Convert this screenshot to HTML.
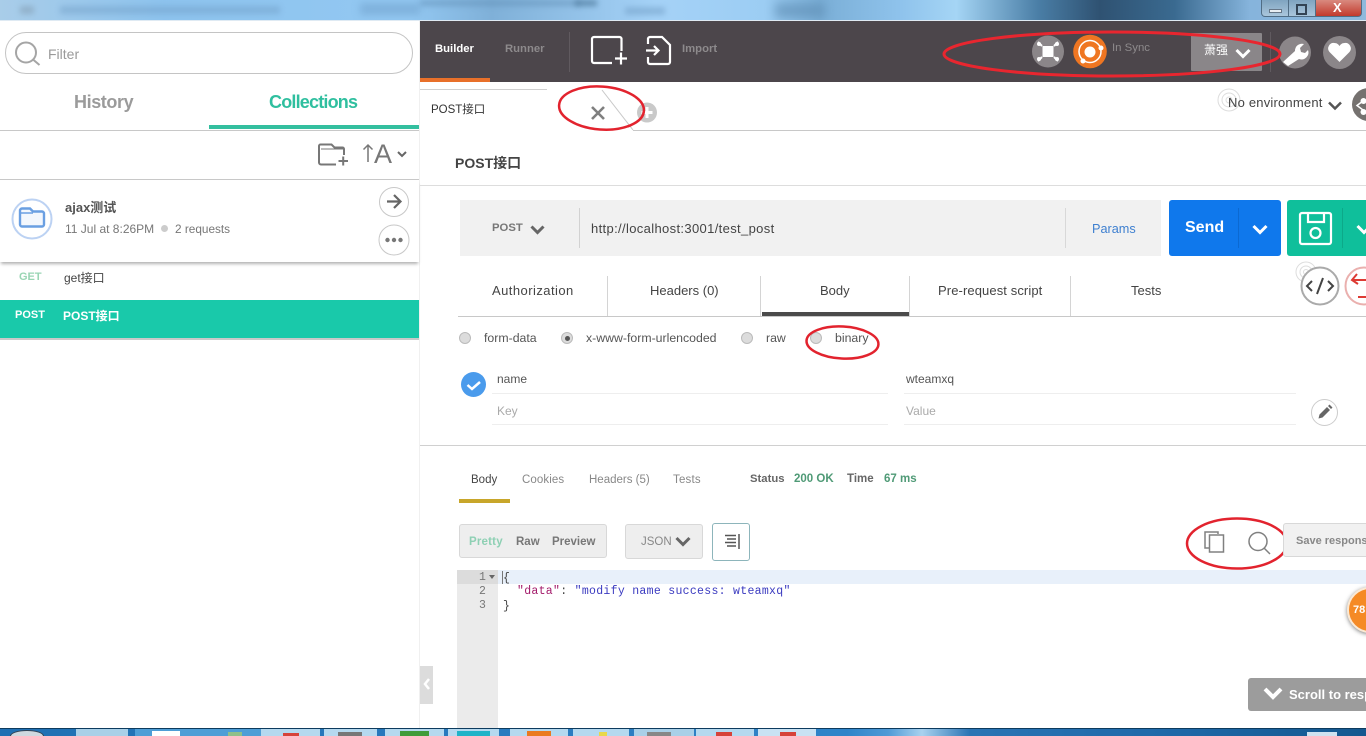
<!DOCTYPE html>
<html><head><meta charset="utf-8">
<style>
html,body{margin:0;padding:0;width:1366px;height:736px;overflow:hidden;background:#fff}
body{position:relative;font-family:"Liberation Sans","Noto Sans CJK SC",sans-serif;color:#444}
.a{position:absolute}
.t{position:absolute;white-space:nowrap;line-height:16px}
svg{position:absolute;overflow:visible}
</style></head><body>
<!-- title bar -->
<div class="a" style="left:0;top:0;width:1366px;height:21px;overflow:hidden;background:linear-gradient(90deg,#a9cde9 0,#8dc3ee 12%,#93c8f2 30%,#7fb0d8 36%,#a5d2f7 48%,#9ccdf3 56%,#7aaed6 60%,#8fc3ec 66%,#a5d5f5 70%,#4a7ea6 76%,#2f5272 80.5%,#3a6a90 86%,#86b4dc 91.5%,#8fb9dc 100%)">
<div class="a" style="left:20px;top:6px;width:14px;height:8px;background:#7f98ad;opacity:.5;filter:blur(3px)"></div>
<div class="a" style="left:60px;top:6px;width:220px;height:8px;background:#6f9cc4;opacity:.45;filter:blur(3px)"></div>
<div class="a" style="left:360px;top:3px;width:60px;height:12px;background:#6d9dc8;opacity:.5;filter:blur(4px)"></div>
<div class="a" style="left:420px;top:0;width:160px;height:6px;background:#5f8cb3;opacity:.5;filter:blur(3px)"></div>
<div class="a" style="left:575px;top:0;width:22px;height:6px;background:#3f6b8c;opacity:.6;filter:blur(3px)"></div>
<div class="a" style="left:625px;top:7px;width:40px;height:8px;background:#6f9cc4;opacity:.5;filter:blur(3px)"></div>
<div class="a" style="left:775px;top:3px;width:50px;height:15px;background:#5d8cb3;opacity:.6;filter:blur(5px)"></div>
</div>
<div class="a" style="left:0;top:20px;width:1366px;height:1px;background:#dfeaf3"></div>
<div class="a" style="left:1261px;top:0;width:28px;height:17px;background:linear-gradient(#7fa4c0,#aac6dc);border:1px solid #506d85;border-top:0;border-radius:0 0 0 4px;box-sizing:border-box"></div>
<div class="a" style="left:1269px;top:9px;width:11px;height:2px;background:#e8eef3;border:1px solid #678"></div>
<div class="a" style="left:1289px;top:0;width:26px;height:17px;background:linear-gradient(#7fa4c0,#aac6dc);border-bottom:1px solid #506d85;box-sizing:border-box"></div>
<div class="a" style="left:1296px;top:4px;width:7px;height:7px;border:2px solid #345"></div>
<div class="a" style="left:1315px;top:0;width:47px;height:17px;background:linear-gradient(#d98a7f,#c23a2c);border:1px solid #506d85;border-top:0;border-radius:0 0 4px 0;box-sizing:border-box"></div>
<div class="t" style="left:1333px;top:0;color:#fff;font-weight:bold;font-size:13px">X</div>

<!-- sidebar -->
<div class="a" style="left:419px;top:21px;width:1px;height:707px;background:#f0f0f0"></div>
<div class="a" style="left:5px;top:32px;width:408px;height:42px;border:1px solid #c4c4c4;border-radius:21px;box-sizing:border-box"></div>
<svg style="left:14px;top:39px" width="28" height="28" fill="none" stroke="#a5a5a5"><circle cx="12" cy="13.500" r="10" stroke-width="2"/><path d="M19 20.500l6.500 5.500" stroke-width="2"/></svg>
<div class="t" style="left:48px;top:46px;font-size:14px;color:#9a9a9a">Filter</div>
<div class="t" style="left:74px;top:92px;font-size:18px;font-weight:bold;color:#9b9b9b;line-height:20px;letter-spacing:-.4px">History</div>
<div class="t" style="left:269px;top:92px;font-size:18px;font-weight:bold;color:#2fbf9f;line-height:20px;letter-spacing:-.8px">Collections</div>
<div class="a" style="left:0;top:130px;width:419px;height:1px;background:#c8c8c8"></div>
<div class="a" style="left:209px;top:125px;width:210px;height:4px;background:#33bf9f"></div>
<svg style="left:318px;top:143px" width="32" height="25" fill="none" stroke="#777" stroke-width="2"><path d="M18 21.500H3a2 2 0 0 1-2-2V3a1.500 1.500 0 0 1 1.500-1.500h11l3 3h8a1.500 1.500 0 0 1 1.500 1.500v6"/><path d="M3 6h22" stroke-width="1"/><path d="M20.500 18h9.500M25.200 13.500v9"/></svg>
<svg style="left:362px;top:143px" width="12" height="20" fill="none" stroke="#777" stroke-width="1.500"><path d="M6 19V2M1.500 6.500L6 2l4.500 4.500"/></svg>
<div class="t" style="left:374px;top:140px;font-size:27px;color:#777;line-height:28px">A</div>
<svg style="left:397px;top:151px" width="10" height="7" fill="none" stroke="#666" stroke-width="2"><path d="M1 1l4 4 4-4"/></svg>
<div class="a" style="left:0;top:179px;width:419px;height:1px;background:#c8c8c8"></div>
<div class="a" style="left:0;top:180px;width:419px;height:82px;background:#fff;box-shadow:0 3px 3px -1px rgba(0,0,0,.3)"></div>
<svg style="left:11px;top:198px" width="42" height="42" fill="none"><circle cx="21" cy="21" r="19.500" stroke="#bcd2f3" stroke-width="2"/><path d="M9 15v-2.500a2 2 0 0 1 2-2h8l3 3h9a2 2 0 0 1 2 2v11a2 2 0 0 1-2 2H11a2 2 0 0 1-2-2z" fill="#f3f7fd" stroke="#6a9fe2" stroke-width="2.400"/><path d="M9 15h13" stroke="#6a9fe2" stroke-width="1.500"/></svg>
<div class="t" style="left:65px;top:200px;font-size:13px;font-weight:bold;color:#555">ajax测试</div>
<div class="t" style="left:65px;top:221px;font-size:12px;color:#777">11 Jul at 8:26PM</div>
<div class="a" style="left:161px;top:225px;width:7px;height:7px;border-radius:50%;background:#ccc"></div>
<div class="t" style="left:175px;top:221px;font-size:11.800px;color:#777">2 requests</div>
<svg style="left:378px;top:186px" width="32" height="32" fill="none"><circle cx="16" cy="16" r="14.500" stroke="#c8c8c8"/><path d="M9 15.500h13M16 9l6.500 6.500L16 22" stroke="#666" stroke-width="2.200"/></svg>
<svg style="left:378px;top:224px" width="32" height="32"><circle cx="16" cy="16" r="15" fill="#fff" stroke="#c8c8c8"/><circle cx="9.500" cy="16" r="2.200" fill="#777"/><circle cx="16" cy="16" r="2.200" fill="#777"/><circle cx="22.500" cy="16" r="2.200" fill="#777"/></svg>
<div class="t" style="left:19px;top:269px;font-size:11px;font-weight:bold;color:#9ad5b4">GET</div>
<div class="t" style="left:64px;top:270px;font-size:12px;color:#444">get接口</div>
<div class="a" style="left:0;top:300px;width:419px;height:38px;background:#19c9aa"></div>
<div class="a" style="left:0;top:338px;width:419px;height:2px;background:#c9c9c9"></div>
<div class="t" style="left:15px;top:307px;font-size:11px;font-weight:bold;color:#fff">POST</div>
<div class="t" style="left:63px;top:308px;font-size:12px;font-weight:bold;color:#fff">POST接口</div>
<div class="a" style="left:420px;top:666px;width:13px;height:38px;background:#dcdcdc"></div>
<svg style="left:423px;top:678px" width="7" height="12" fill="none" stroke="#fff" stroke-width="2.500"><path d="M6 1L2 6l4 5"/></svg>

<!-- header -->
<div class="a" style="left:420px;top:21px;width:946px;height:61px;background:#4c464b"></div>
<div class="a" style="left:420px;top:78px;width:70px;height:4px;background:#e8702a"></div>
<div class="t" style="left:435px;top:41px;font-size:11.300px;font-weight:bold;color:#fff">Builder</div>
<div class="t" style="left:505px;top:41px;font-size:11.300px;font-weight:bold;color:#8d8a8c">Runner</div>
<div class="a" style="left:569px;top:32px;width:1px;height:40px;background:#605a5f"></div>
<svg style="left:590px;top:35px" width="38" height="31" fill="none" stroke="#fff" stroke-width="2.200"><path d="M31.500 16V4a2 2 0 0 0-2-2H4a2 2 0 0 0-2 2v22a2 2 0 0 0 2 2h18"/><path d="M25 23.500h12M31 17.500v12"/></svg>
<svg style="left:646px;top:35px" width="26" height="31" fill="none" stroke="#fff" stroke-width="2.200"><path d="M2 9V4a2 2 0 0 1 2-2h12l8 8v17a2 2 0 0 1-2 2H4a2 2 0 0 1-2-2v-5"/><path d="M0 15.500h12M8 11l4.500 4.500L8 20"/></svg>
<div class="t" style="left:682px;top:41px;font-size:11.300px;font-weight:bold;color:#8d8a8c">Import</div>
<svg style="left:1032px;top:35px" width="33" height="33"><circle cx="16" cy="16.500" r="16" fill="#8b8689"/><rect x="10.500" y="11" width="11" height="11" fill="#fff"/><path d="M6 7l4 4M26 7l-4 4M6 26l4-4M26 26l-4-4" stroke="#fff" stroke-width="2"/><circle cx="7" cy="9" r="2" fill="#fff"/><circle cx="25" cy="9" r="2" fill="#fff"/><circle cx="7" cy="24" r="2" fill="#fff"/><circle cx="25" cy="24" r="2" fill="#fff"/></svg>
<svg style="left:1073px;top:34px" width="35" height="35"><circle cx="17" cy="17.500" r="16.800" fill="#ef7622"/><circle cx="17" cy="17.500" r="11" fill="none" stroke="#fff" stroke-width="1.500"/><circle cx="17" cy="18" r="5.500" fill="#fff"/><circle cx="28" cy="14" r="2.500" fill="#fff"/><circle cx="10" cy="27" r="2.500" fill="#fff"/></svg>
<div class="t" style="left:1112px;top:40px;font-size:11.400px;color:#8d8a8c">In Sync</div>
<div class="a" style="left:1191px;top:33px;width:71px;height:38px;background:#8a8689;border-radius:1px"></div>
<div class="t" style="left:1204px;top:42px;font-size:12px;color:#fff">萧强</div>
<svg style="left:1235px;top:48px" width="16" height="11" fill="none" stroke="#fff" stroke-width="3"><path d="M1.500 2L8 8.500 14.500 2"/></svg>
<div class="a" style="left:1270px;top:32px;width:1px;height:40px;background:#605a5f"></div>
<svg style="left:1279px;top:36px" width="33" height="33"><circle cx="16" cy="16.500" r="16" fill="#8b8689"/><path d="M4 26l12-11a7 7 0 0 1 9-7l-4 4 1 4 4 1 3-3a7 7 0 0 1-9 9L9 30z" fill="#fff"/></svg>
<svg style="left:1323px;top:36px" width="33" height="33"><circle cx="16.500" cy="16.500" r="16.500" fill="#8b8689"/><path d="M16.500 26L6.500 16a5.500 5.500 0 0 1 5-9c2.500 0 4 1.500 5 3 1-1.500 2.500-3 5-3a5.500 5.500 0 0 1 5 9z" fill="#fff"/></svg>
<svg style="left:943px;top:27px" width="340" height="55" fill="none"><ellipse cx="169" cy="27" rx="168" ry="22" stroke="#e8262f" stroke-width="3"/></svg>

<!-- tab row -->
<div class="a" style="left:420px;top:89px;width:127px;height:1px;background:#d0d0d0"></div>
<div class="a" style="left:633px;top:130px;width:733px;height:1px;background:#c8c8c8"></div>
<svg style="left:600px;top:89px" width="40" height="42" fill="none"><path d="M2 1L33 41" stroke="#c8c8c8"/></svg>
<div class="t" style="left:431px;top:102px;font-size:11.500px;color:#333">POST接口</div>
<svg style="left:591px;top:106px" width="14" height="14" fill="none" stroke="#7f7f7f" stroke-width="2.600"><path d="M1 1l12 12M13 1L1 13"/></svg>
<svg style="left:636px;top:102px" width="22" height="22"><circle cx="11" cy="10.500" r="10" fill="#c9c9c9"/><path d="M11 5v11M5.500 10.500h11" stroke="#fff" stroke-width="3"/></svg>
<svg style="left:557px;top:85px" width="90" height="46" fill="none"><ellipse cx="44.500" cy="23" rx="42.500" ry="21.500" stroke="#e2232e" stroke-width="2.500" transform="rotate(4 44 23)"/></svg>
<svg style="left:1217px;top:88px" width="24" height="24" fill="none" stroke="#ddd"><circle cx="12" cy="12" r="11"/><circle cx="12" cy="12" r="7"/><circle cx="12" cy="12" r="3"/></svg>
<div class="t" style="left:1228px;top:95px;font-size:13px;color:#444;letter-spacing:.2px">No environment</div>
<svg style="left:1327px;top:101px" width="16" height="10" fill="none" stroke="#555" stroke-width="2.500"><path d="M2 1.500L8 7.500l6-6"/></svg>
<div class="a" style="left:1352px;top:88px;width:33px;height:33px;border-radius:50%;background:#75716f"></div>
<svg style="left:1356px;top:96px" width="10" height="20" fill="none"><path d="M7 5L1 9.500 7 14" stroke="#fff" stroke-width="1.500"/><circle cx="7.500" cy="5" r="3" fill="#fff"/><circle cx="7.500" cy="16" r="3" fill="#fff"/></svg>

<div class="t" style="left:455px;top:155px;font-size:14px;font-weight:bold;color:#444">POST接口</div>
<div class="a" style="left:420px;top:185px;width:946px;height:1px;background:#ddd"></div>

<!-- url bar -->
<div class="a" style="left:460px;top:200px;width:701px;height:56px;background:#f1f1f1"></div>
<div class="t" style="left:492px;top:220px;font-size:11.300px;font-weight:bold;color:#777">POST</div>
<svg style="left:530px;top:225px" width="15" height="10" fill="none" stroke="#666" stroke-width="3"><path d="M1.500 1.500L7.500 7.500l6-6"/></svg>
<div class="a" style="left:579px;top:208px;width:1px;height:40px;background:#d2d2d2"></div>
<div class="t" style="left:591px;top:221px;font-size:13px;color:#444;letter-spacing:.35px">http://localhost:3001/test_post</div>
<div class="a" style="left:1065px;top:208px;width:1px;height:40px;background:#d8d8d8"></div>
<div class="t" style="left:1092px;top:221px;font-size:12.700px;color:#3f80d0">Params</div>
<div class="a" style="left:1169px;top:200px;width:112px;height:56px;background:#0f78ec;border-radius:3px"></div>
<div class="t" style="left:1185px;top:219px;font-size:16px;font-weight:bold;color:#fff;line-height:18px">Send</div>
<div class="a" style="left:1238px;top:208px;width:1px;height:40px;background:#0b69d2"></div>
<svg style="left:1252px;top:224px" width="16" height="11" fill="none" stroke="#fff" stroke-width="3"><path d="M1.500 2L8 8.500 14.500 2"/></svg>
<div class="a" style="left:1287px;top:200px;width:79px;height:56px;background:#0fbf9b;border-radius:3px 0 0 3px"></div>
<svg style="left:1298px;top:211px" width="36" height="36" fill="none" stroke="#fff" stroke-width="2.200"><rect x="2" y="2" width="31" height="31" rx="2"/><path d="M10 2v9h16V2"/><circle cx="17.500" cy="22" r="5"/></svg>
<div class="a" style="left:1342px;top:208px;width:1px;height:40px;background:#0ca989"></div>
<svg style="left:1356px;top:224px" width="16" height="11" fill="none" stroke="#fff" stroke-width="3"><path d="M1.500 2L8 8.500 14.500 2"/></svg>

<!-- request tabs -->
<div class="a" style="left:458px;top:316px;width:908px;height:1px;background:#c8c8c8"></div>
<div class="a" style="left:607px;top:276px;width:1px;height:40px;background:#d4d4d4"></div>
<div class="a" style="left:760px;top:276px;width:1px;height:40px;background:#d4d4d4"></div>
<div class="a" style="left:909px;top:276px;width:1px;height:40px;background:#d4d4d4"></div>
<div class="a" style="left:1070px;top:276px;width:1px;height:40px;background:#d4d4d4"></div>
<div class="a" style="left:762px;top:312px;width:147px;height:4px;background:#4b4b4b"></div>
<div class="t" style="left:492px;top:283px;font-size:13px;color:#444;letter-spacing:.45px">Authorization</div>
<div class="t" style="left:650px;top:283px;font-size:13px;color:#444">Headers (0)</div>
<div class="t" style="left:820px;top:283px;font-size:13px;color:#444">Body</div>
<div class="t" style="left:938px;top:283px;font-size:13px;color:#444;letter-spacing:.1px">Pre-request script</div>
<div class="t" style="left:1131px;top:283px;font-size:13px;color:#444">Tests</div>
<svg style="left:1295px;top:261px" width="24" height="24" fill="none" stroke="#ddd"><circle cx="11" cy="11" r="10"/><circle cx="11" cy="11" r="6"/><circle cx="11" cy="11" r="2.500"/></svg>
<svg style="left:1300px;top:266px" width="40" height="40" fill="none"><circle cx="20" cy="20" r="18.500" fill="#fff" stroke="#aaa" stroke-width="2"/><path d="M12 15l-5 5 5 5M28 15l5 5-5 5M23 12l-6 16" stroke="#444" stroke-width="2"/></svg>
<svg style="left:1344px;top:266px" width="40" height="40" fill="none"><circle cx="20" cy="20" r="18.500" stroke="#eab0ae" stroke-width="2"/><path d="M13 8L8 14l6 4M8 14h16M14 31h10" stroke="#dd3a33" stroke-width="2"/></svg>

<!-- body type radios -->
<div class="a" style="left:459px;top:332px;width:12px;height:12px;border-radius:50%;background:#dcdcdc;border:1px solid #bbb;box-sizing:border-box"></div>
<div class="t" style="left:484px;top:330px;font-size:12.300px;color:#555">form-data</div>
<div class="a" style="left:561px;top:332px;width:12px;height:12px;border-radius:50%;background:#dcdcdc;border:1px solid #bbb;box-sizing:border-box"></div>
<div class="a" style="left:565px;top:336px;width:5px;height:5px;border-radius:50%;background:#555"></div>
<div class="t" style="left:586px;top:330px;font-size:12.300px;color:#555">x-www-form-urlencoded</div>
<div class="a" style="left:741px;top:332px;width:12px;height:12px;border-radius:50%;background:#dcdcdc;border:1px solid #bbb;box-sizing:border-box"></div>
<div class="t" style="left:766px;top:330px;font-size:12.300px;color:#555">raw</div>
<div class="a" style="left:810px;top:332px;width:12px;height:12px;border-radius:50%;background:#dcdcdc;border:1px solid #bbb;box-sizing:border-box"></div>
<div class="t" style="left:835px;top:330px;font-size:12.300px;color:#555">binary</div>
<svg style="left:804px;top:324px" width="78" height="38" fill="none"><ellipse cx="38.500" cy="18.500" rx="36" ry="16" stroke="#e2232e" stroke-width="2.500" transform="rotate(3 38 18)"/></svg>

<!-- key value -->
<svg style="left:461px;top:372px" width="26" height="26"><circle cx="12.500" cy="12.500" r="12.500" fill="#4a9bec"/><path d="M6.500 13l4.500 4 8-7" fill="none" stroke="#fff" stroke-width="2.500"/></svg>
<div class="t" style="left:497px;top:371px;font-size:12px;color:#555">name</div>
<div class="t" style="left:906px;top:371px;font-size:12px;color:#555">wteamxq</div>
<div class="t" style="left:497px;top:403px;font-size:12px;color:#aaa">Key</div>
<div class="t" style="left:906px;top:403px;font-size:12px;color:#aaa">Value</div>
<div class="a" style="left:492px;top:393px;width:396px;height:1px;background:#eee"></div>
<div class="a" style="left:492px;top:424px;width:396px;height:1px;background:#eee"></div>
<div class="a" style="left:904px;top:393px;width:392px;height:1px;background:#eee"></div>
<div class="a" style="left:904px;top:424px;width:392px;height:1px;background:#eee"></div>
<svg style="left:1311px;top:399px" width="27" height="27"><circle cx="13.500" cy="13.500" r="13" fill="#fff" stroke="#ccc"/><path d="M7.500 19.500l1-4 7.500-7.500 3 3-7.500 7.500zM17 7l1.500-1.500 3 3L20 10z" fill="#666"/></svg>
<div class="a" style="left:420px;top:445px;width:946px;height:1px;background:#d0d0d0"></div>

<!-- response -->
<div class="t" style="left:471px;top:472px;font-size:11.500px;color:#444">Body</div>
<div class="t" style="left:522px;top:472px;font-size:11.500px;color:#888;letter-spacing:.1px">Cookies</div>
<div class="t" style="left:589px;top:472px;font-size:11.500px;color:#888">Headers (5)</div>
<div class="t" style="left:673px;top:472px;font-size:11.500px;color:#888;letter-spacing:.2px">Tests</div>
<div class="a" style="left:459px;top:499px;width:51px;height:4px;background:#c8a62a"></div>
<div class="t" style="left:750px;top:471px;font-size:11.300px;font-weight:bold;color:#666">Status</div>
<div class="t" style="left:794px;top:471px;font-size:11.500px;font-weight:bold;color:#4f9a76">200 OK</div>
<div class="t" style="left:847px;top:471px;font-size:11.500px;font-weight:bold;color:#666">Time</div>
<div class="t" style="left:884px;top:471px;font-size:11.500px;font-weight:bold;color:#4f9a76">67 ms</div>

<div class="a" style="left:459px;top:524px;width:148px;height:34px;background:#eee;border:1px solid #d8d8d8;border-radius:3px;box-sizing:border-box"></div>
<div class="t" style="left:469px;top:534px;font-size:11.500px;font-weight:bold;color:#8ed0b4;letter-spacing:.2px">Pretty</div>
<div class="t" style="left:516px;top:534px;font-size:11.500px;font-weight:bold;color:#777">Raw</div>
<div class="t" style="left:552px;top:534px;font-size:11.500px;font-weight:bold;color:#777">Preview</div>
<div class="a" style="left:625px;top:524px;width:78px;height:35px;background:#eee;border:1px solid #d8d8d8;border-radius:3px;box-sizing:border-box"></div>
<div class="t" style="left:641px;top:534px;font-size:11.500px;color:#888">JSON</div>
<svg style="left:675px;top:536px" width="16" height="11" fill="none" stroke="#666" stroke-width="3"><path d="M1.500 2L8 8.500 14.500 2"/></svg>
<div class="a" style="left:712px;top:523px;width:38px;height:38px;border:1px solid #8db5bb;border-radius:3px;box-sizing:border-box"></div>
<svg style="left:724px;top:534px" width="16" height="16" fill="none" stroke="#555"><path d="M1 1.500h11M3 5h9M1 8.500h11M3 12h9" stroke-width="1.500"/><path d="M15 0v15" stroke-width="1.500"/></svg>

<svg style="left:1204px;top:531px" width="22" height="22" fill="none" stroke="#808080" stroke-width="1.500"><path d="M14 3V1H1v16h4"/><rect x="5.500" y="4" width="14" height="17" fill="#fff"/></svg>
<svg style="left:1247px;top:531px" width="24" height="24" fill="none" stroke="#808080" stroke-width="1.500"><circle cx="11" cy="10.500" r="9"/><path d="M17 17l6 6"/></svg>
<svg style="left:1185px;top:517px" width="105" height="54" fill="none"><ellipse cx="52" cy="26.500" rx="50" ry="25" stroke="#e2232e" stroke-width="2.500"/></svg>
<div class="a" style="left:1283px;top:523px;width:90px;height:34px;background:#f1f1f1;border:1px solid #d8d8d8;border-radius:3px;box-sizing:border-box"></div>
<div class="t" style="left:1296px;top:533px;font-size:11px;font-weight:bold;color:#888">Save respons</div>

<!-- code -->
<div class="a" style="left:457px;top:570px;width:41px;height:158px;background:#ebebeb"></div>
<div class="a" style="left:498px;top:570px;width:868px;height:14px;background:#e8f0fa"></div>
<div class="a" style="left:457px;top:570px;width:41px;height:14px;background:#dcdcdc"></div>
<div class="a" style="left:502px;top:571px;width:1px;height:13px;background:#777"></div>
<div class="t" style="left:479px;top:571px;font:11.500px/14px 'Liberation Mono',monospace;color:#777">1</div>
<div class="t" style="left:479px;top:585px;font:11.500px/14px 'Liberation Mono',monospace;color:#777">2</div>
<div class="t" style="left:479px;top:599px;font:11.500px/14px 'Liberation Mono',monospace;color:#777">3</div>
<svg style="left:489px;top:575px" width="6" height="4"><path d="M0 0h6L3 4z" fill="#666"/></svg>
<div class="t" style="left:503px;top:572px;font:11.500px/14px 'Liberation Mono',monospace;color:#444">{</div>
<div class="t" style="left:517px;top:585px;font:11.500px/14px 'Liberation Mono',monospace;color:#444;letter-spacing:.3px"><span style="color:#a31a6a">"data"</span>: <span style="color:#3a3ac0">"modify name success: wteamxq"</span></div>
<div class="t" style="left:503px;top:600px;font:11.500px/14px 'Liberation Mono',monospace;color:#444">}</div>

<!-- floats -->
<div class="a" style="left:1347px;top:587px;width:46px;height:46px;border-radius:50%;background:#f58a25;border:2px solid #fbe9d4;box-sizing:border-box;box-shadow:0 1px 4px rgba(0,0,0,.5)"></div>
<div class="t" style="left:1353px;top:602px;font-size:11px;font-weight:bold;color:#fff">78</div>
<div class="a" style="left:1248px;top:678px;width:118px;height:33px;background:#9c9c9c;border-radius:3px 0 0 3px"></div>
<svg style="left:1263px;top:686px" width="20" height="15" fill="none" stroke="#fff" stroke-width="4"><path d="M2 3l8 8 8-8"/></svg>
<div class="t" style="left:1289px;top:687px;font-size:13px;font-weight:bold;color:#fff">Scroll to resp</div>

<!-- taskbar -->
<div class="a" style="left:0;top:728px;width:1366px;height:8px;background:linear-gradient(90deg,#1f70b3 0,#2a7cc0 40%,#2f84c9 62%,#4f9ad6 65%,#a9d2ef 67.500%,#2a74b4 71%,#1f69a9 85%,#14588f 100%);border-top:1px solid #0d3b5e;box-sizing:border-box"></div>
<div class="a" style="left:10px;top:730px;width:34px;height:12px;border-radius:50%;background:#cfd8df;border:1px solid #345;box-sizing:border-box"></div>
<div class="a" style="left:76px;top:729px;width:52px;height:7px;background:#a9d0e8"></div>
<div class="a" style="left:135px;top:729px;width:126px;height:7px;background:#4e9ed6"></div>
<div class="a" style="left:152px;top:731px;width:28px;height:5px;background:#fff"></div>
<div class="a" style="left:228px;top:732px;width:14px;height:4px;background:#8fc08a"></div>
<div class="a" style="left:261px;top:729px;width:59px;height:7px;background:#b5d9ef"></div>
<div class="a" style="left:283px;top:733px;width:16px;height:3px;background:#d6433a"></div>
<div class="a" style="left:324px;top:729px;width:53px;height:7px;background:#b5d9ef"></div>
<div class="a" style="left:338px;top:732px;width:24px;height:4px;background:#777"></div>
<div class="a" style="left:385px;top:729px;width:59px;height:7px;background:#b5d9ef"></div>
<div class="a" style="left:400px;top:731px;width:29px;height:5px;background:#3f9c3a"></div>
<div class="a" style="left:448px;top:729px;width:51px;height:7px;background:#b5d9ef"></div>
<div class="a" style="left:457px;top:731px;width:33px;height:5px;background:#1fb3c8"></div>
<div class="a" style="left:510px;top:729px;width:58px;height:7px;background:#b5d9ef"></div>
<div class="a" style="left:527px;top:731px;width:24px;height:5px;background:#ea7a20"></div>
<div class="a" style="left:573px;top:729px;width:56px;height:7px;background:#b5d9ef"></div>
<div class="a" style="left:599px;top:732px;width:8px;height:4px;background:#e8d84a"></div>
<div class="a" style="left:634px;top:729px;width:60px;height:7px;background:#a9d0e8"></div>
<div class="a" style="left:647px;top:732px;width:24px;height:4px;background:#888"></div>
<div class="a" style="left:696px;top:729px;width:58px;height:7px;background:#b5d9ef"></div>
<div class="a" style="left:758px;top:729px;width:58px;height:7px;background:#c9e2f3"></div>
<div class="a" style="left:716px;top:732px;width:16px;height:4px;background:#d6433a"></div>
<div class="a" style="left:780px;top:732px;width:16px;height:4px;background:#d6433a"></div>
<div class="a" style="left:1307px;top:732px;width:30px;height:4px;background:#cfe2f0"></div>
</body></html>
